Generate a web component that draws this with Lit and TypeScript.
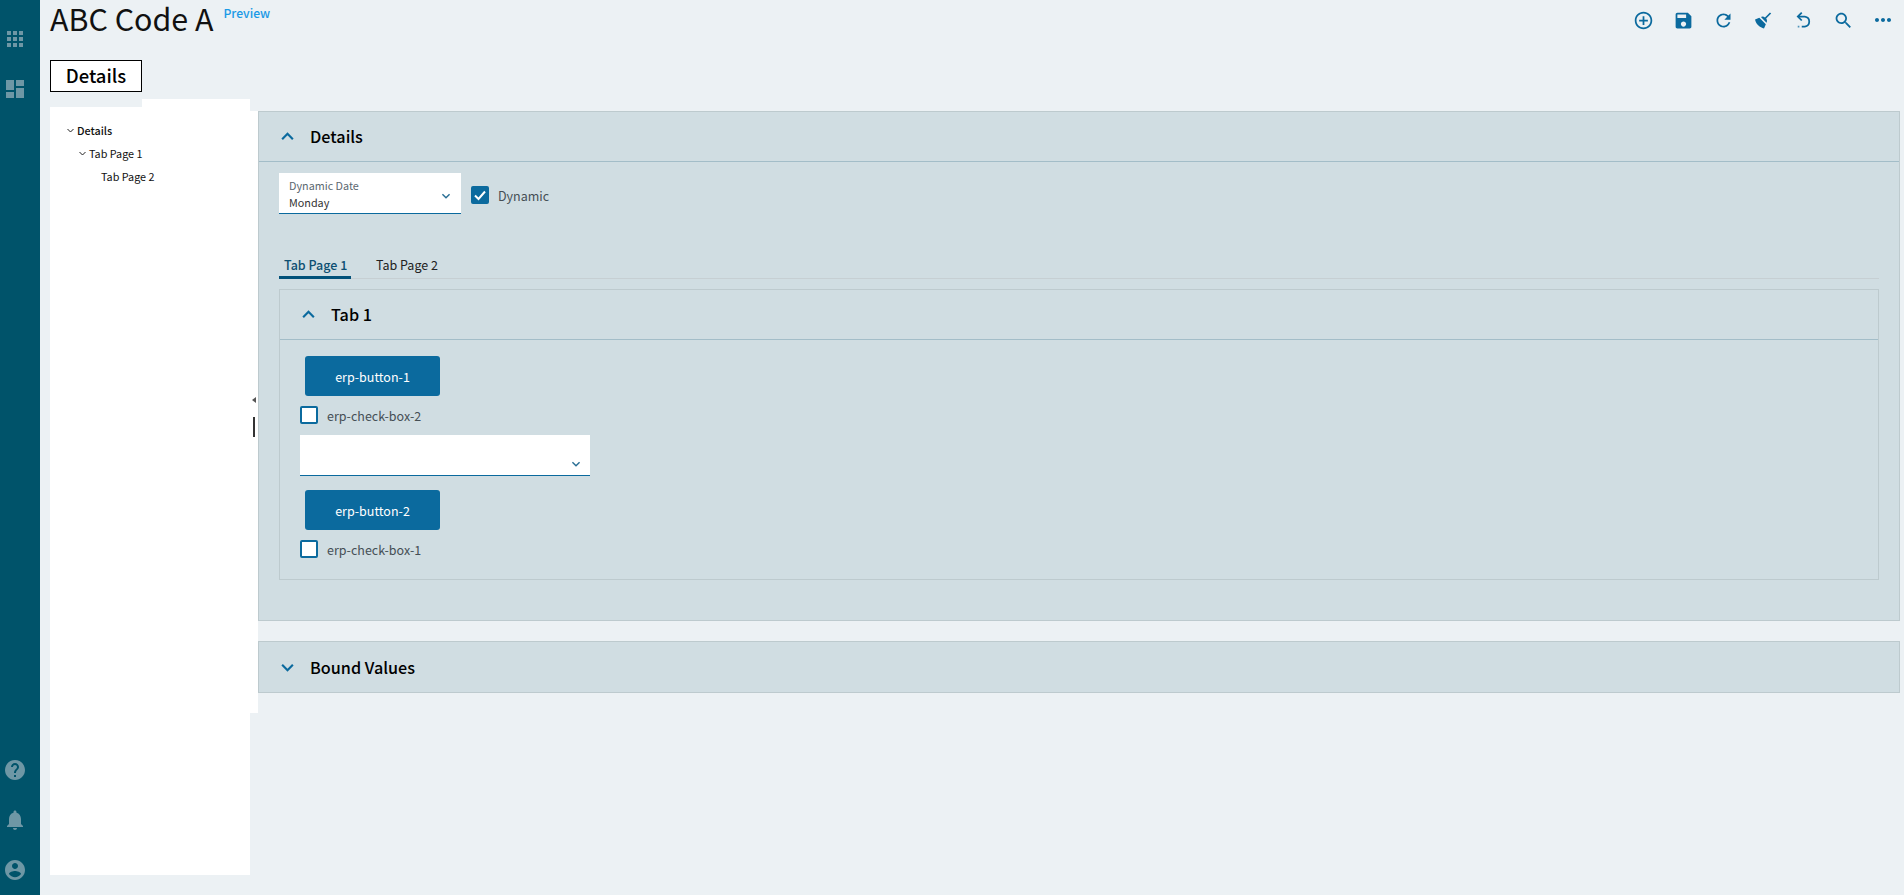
import { LitElement, html, css, svg } from "lit";
import { customElement } from "lit/decorators.js";

const icon = (d: string, size = 24) =>
  html`<svg width=${size} height=${size} viewBox="0 0 24 24" fill="currentColor">${svg`<path d=${d}></path>`}</svg>`;

const P = {
  apps: "M4 8h4V4H4v4zm6 12h4v-4h-4v4zm-6 0h4v-4H4v4zm0-6h4v-4H4v4zm6 0h4v-4h-4v4zm6-10v4h4V4h-4zm-6 4h4V4h-4v4zm6 6h4v-4h-4v4zm0 6h4v-4h-4v4z",
  dash: "M3 13h8V3H3v10zm0 8h8v-6H3v6zm10 0h8V11h-8v10zm0-18v6h8V3h-8z",
  help: "M12 2C6.48 2 2 6.48 2 12s4.48 10 10 10 10-4.48 10-10S17.52 2 12 2zm1 17h-2v-2h2v2zm2.07-7.75l-.9.92C13.45 12.9 13 13.5 13 15h-2v-.5c0-1.1.45-2.1 1.17-2.83l1.24-1.26c.37-.36.59-.86.59-1.41 0-1.1-.9-2-2-2s-2 .9-2 2H8c0-2.21 1.79-4 4-4s4 1.79 4 4c0 .88-.36 1.68-.93 2.25z",
  bell: "M12 22c1.1 0 2-.9 2-2h-4c0 1.1.9 2 2 2zm6-6v-5c0-3.07-1.63-5.64-4.5-6.32V4c0-.83-.67-1.5-1.5-1.5s-1.5.67-1.5 1.5v.68C7.64 5.36 6 7.92 6 11v5l-2 2v1h16v-1l-2-2z",
  user: "M12 2C6.48 2 2 6.48 2 12s4.48 10 10 10 10-4.48 10-10S17.52 2 12 2zm0 3c1.66 0 3 1.34 3 3s-1.34 3-3 3-3-1.34-3-3 1.34-3 3-3zm0 14.2c-2.5 0-4.71-1.28-6-3.22.03-1.99 4-3.08 6-3.08 1.99 0 5.97 1.09 6 3.08-1.29 1.94-3.5 3.22-6 3.22z",
  add: "M13 7h-2v4H7v2h4v4h2v-4h4v-2h-4V7zm-1-5C6.48 2 2 6.48 2 12s4.48 10 10 10 10-4.48 10-10S17.52 2 12 2zm0 18c-4.41 0-8-3.59-8-8s3.59-8 8-8 8 3.59 8 8-3.59 8-8 8z",
  save: "M17 3H5c-1.11 0-2 .9-2 2v14c0 1.1.89 2 2 2h14c1.1 0 2-.9 2-2V7l-4-4zm-5 16c-1.66 0-3-1.34-3-3s1.34-3 3-3 3 1.34 3 3-1.34 3-3 3zm3-10H5V5h10v4z",
  refresh: "M17.65 6.35C16.2 4.9 14.21 4 12 4c-4.42 0-7.99 3.58-7.99 8s3.57 8 7.99 8c3.73 0 6.84-2.55 7.73-6h-2.08c-.82 2.33-3.04 4-5.65 4-3.31 0-6-2.69-6-6s2.69-6 6-6c1.66 0 3.14.69 4.22 1.78L13 11h7V4l-2.35 2.35z",
  broom: "M19.36,2.72L20.78,4.14L15.06,9.85C16.13,11.39 16.28,13.24 15.38,14.44L9.06,8.12C10.26,7.22 12.11,7.37 13.65,8.44L19.36,2.72M5.93,17.57C3.92,15.56 2.69,13.16 2.35,10.92L7.23,8.83L14.67,16.27L12.58,21.15C10.34,20.81 7.94,19.58 5.93,17.57Z",
  search: "M15.5 14h-.79l-.28-.27C15.41 12.59 16 11.11 16 9.5 16 5.91 13.09 3 9.5 3S3 5.91 3 9.5 5.91 16 9.5 16c1.61 0 3.09-.59 4.23-1.57l.27.28v.79l5 4.99L20.49 19l-4.99-5zm-6 0C7.01 14 5 11.99 5 9.5S7.01 5 9.5 5 14 7.01 14 9.5 11.99 14 9.5 14z",
  more: "M6 10c-1.1 0-2 .9-2 2s.9 2 2 2 2-.9 2-2-.9-2-2-2zm12 0c-1.1 0-2 .9-2 2s.9 2 2 2 2-.9 2-2-.9-2-2-2zm-6 0c-1.1 0-2 .9-2 2s.9 2 2 2 2-.9 2-2-.9-2-2-2z",
};

const undo = html`<svg width="21" height="21" viewBox="0 0 24 24" fill="none" stroke="currentColor" stroke-width="2">
  ${svg`<path d="M10 3 5.5 7.5 10 12"></path><path d="M6 7.5h7.5a5.8 5.8 0 0 1 0 11.5H10"></path><path d="M5.5 19H8" stroke-dasharray="1 1.2"></path>`}
</svg>`;

const chev = (up: boolean, w = 15, cls = "chev") =>
  html`<svg class=${cls} width=${w} height=${w} viewBox="0 0 14 14" fill="none" stroke="currentColor" stroke-width="2">
    ${svg`<path d=${up ? "M2 9.5 7 4.5 12 9.5" : "M2 4.5 7 9.5 12 4.5"}></path>`}
  </svg>`;

const small = html`<svg width="7" height="5" viewBox="0 0 7 5" fill="none" stroke="#222" stroke-width="1">${svg`<path d="M.5 1 3.5 4 6.5 1"></path>`}</svg>`;

@customElement("app-root")
export class AppRoot extends LitElement {
  static styles = css`
    :host {
      display: flex;
      width: 1904px;
      height: 895px;
      overflow: hidden;
      background: #ecf1f4;
      font-family: "Noto Sans CJK SC", "Source Sans Pro", "Noto Sans", sans-serif;
      color: #000;
    }
    .rail {
      width: 40px;
      flex: none;
      background: #00536a;
      color: #6e97a5;
      display: flex;
      flex-direction: column;
      justify-content: space-between;
      box-sizing: border-box;
      padding: 24px 0 10px;
    }
    .rail-group { display: flex; flex-direction: column; gap: 20px; }
    .rail-item { height: 30px; display: flex; align-items: center; justify-content: center; padding-right: 10px; width: 40px; box-sizing: border-box; }
    .main { flex: 1; min-width: 0; display: flex; flex-direction: column; padding-left: 10px; }
    .top { height: 60px; display: flex; align-items: flex-start; justify-content: space-between; }
    .title { display: flex; align-items: flex-start; }
    h1 { margin: 0; font-size: 30.4px; font-weight: 400; line-height: 36px; color: #111; white-space: nowrap; }
    .preview { font-size: 12.2px; font-weight: 500; color: #1b9ae6; line-height: 18px; margin: 4px 0 0 10px; }
    .tools { display: flex; color: #0b6a9e; padding: 8px 0 0; margin-right: 1px; }
    .tools span { width: 40px; height: 24px; display: flex; align-items: center; justify-content: center; }
    .tabbar { display: flex; height: 32px; }
    .maintab {
      width: 92px; box-sizing: border-box; border: 1px solid #000; background: #fff; padding-bottom: 2px;
      display: flex; align-items: center; justify-content: center;
      font-size: 18.5px; font-weight: 500; line-height: 24px;
    }
    .body { display: flex; margin-top: 15px; }
    .left { position: relative; width: 200px; height: 768px; background: #fff; flex: none; }
    .left::before { content: ""; position: absolute; left: 92px; top: -8px; width: 108px; height: 8px; background: #fff; }
    .left::after { content: ""; position: absolute; left: 0; top: 4px; width: 208px; height: 602px; background: #fff; }
    .tree { position: relative; z-index: 1; padding-top: 12px; font-size: 10.8px; line-height: 23px; color: #111; }
    .node { display: flex; align-items: center; height: 23px; gap: 3px; white-space: nowrap; }
    .node.l0 { padding-left: 17px; font-weight: 500; }
    .node.l1 { padding-left: 29px; }
    .node.l2 { padding-left: 51px; }
    .grip { position: absolute; z-index: 2; left: 203px; top: 290px; width: 3px; }
    .grip i { display: block; width: 0; height: 0; margin-left: -1px; border: 3px solid transparent; border-left: 0; border-right: 4px solid #555; }
    .grip b { display: block; width: 2px; height: 20px; margin-top: 14px; background: #333; }
    .content { flex: 1; margin: 4px 4px 0 8px; display: flex; flex-direction: column; gap: 20px; }
    .section { background: #d0dde2; border: 1px solid #bdcace; box-sizing: border-box; }
    .head {
      height: 50px; box-sizing: border-box; display: flex; align-items: center; gap: 15px; padding-left: 21px;
      font-size: 16.2px; font-weight: 500; color: #000; white-space: nowrap;
    }
    .head.line { border-bottom: 1px solid #a3bdc8; padding-bottom: 1px; }
    .chev { color: #0b6a9e; flex: none; }
    .details { height: 510px; }
    .bound { height: 52px; }
    .sec-body { padding: 11px 20px 0; }
    .row { display: flex; align-items: center; }
    .select {
      position: relative; width: 182px; height: 41px; box-sizing: border-box; background: #fff;
      border-bottom: 1px solid #0b6a9e; padding: 4px 10px; font-size: 10.8px; line-height: 16px;
    }
    .select .lab { color: #5c6870; }
    .select .val { color: #333; margin-top: 1px; }
    .sel-chev { position: absolute; right: 10px; top: 18px; color: #2a6f95; }
    .cb {
      width: 18px; height: 18px; box-sizing: border-box; border: 2px solid #0b6a9e; border-radius: 2px; background: #fff;
      display: flex; align-items: center; justify-content: center; flex: none;
    }
    .cb.on { background: #0b6a9e; }
    .cb-wrap { display: flex; align-items: center; gap: 9px; font-size: 12.5px; color: #454f55; height: 18px; white-space: nowrap; }
    .row .cb-wrap { margin: 3px 0 0 10px; }
    .tabs { display: flex; margin-top: 36px; height: 29px; border-bottom: 1px solid #c6cfd3; box-sizing: border-box; font-size: 12.5px; font-weight: 400; color: #222; width: 1600px; white-space: nowrap; }
    .tab { padding: 0 5px; height: 29px; box-sizing: border-box; line-height: 29px; }
    .tab.on { width: 72px; border-bottom: 3px solid #03527a; color: #0d4f72; font-weight: 500; margin-right: 20px; }
    .inner { margin-top: 10px; width: 1600px; height: 291px; box-sizing: border-box; }
    .inner-body { padding: 16px 20px 0; display: flex; flex-direction: column; align-items: flex-start; }
    .btn {
      width: 135px; height: 40px; margin-left: 5px; background: #0b6a9e; color: #fff; border: none; border-radius: 3px;
      font: 400 12.5px "Noto Sans CJK SC", sans-serif; display: flex; align-items: center; justify-content: center;
    }
    .inner-body .cb-wrap { margin-top: 10px; }
    .select2 { width: 290px; height: 41px; margin-top: 11px; margin-bottom: 14px; position: relative; box-sizing: border-box; background: #fff; border-bottom: 1px solid #0b6a9e; }
    .select2 .sel-chev { right: 9px; top: 24px; }
  `;

  render() {
    return html`
      <nav class="rail">
        <div class="rail-group">
          <div class="rail-item">${icon(P.apps, 24)}</div>
          <div class="rail-item">${icon(P.dash, 24)}</div>
        </div>
        <div class="rail-group">
          <div class="rail-item">${icon(P.help, 24)}</div>
          <div class="rail-item">${icon(P.bell, 24)}</div>
          <div class="rail-item">${icon(P.user, 24)}</div>
        </div>
      </nav>
      <div class="main">
        <header class="top">
          <div class="title"><h1>ABC Code A</h1><span class="preview">Preview</span></div>
          <div class="tools">
            <span>${icon(P.add, 21)}</span>
            <span>${icon(P.save, 21)}</span>
            <span>${icon(P.refresh, 21)}</span>
            <span>${icon(P.broom, 21)}</span>
            <span>${undo}</span>
            <span>${icon(P.search, 21)}</span>
            <span>${icon(P.more, 24)}</span>
          </div>
        </header>
        <div class="tabbar"><div class="maintab">Details</div></div>
        <div class="body">
          <aside class="left">
            <div class="tree">
              <div class="node l0">${small}<span>Details</span></div>
              <div class="node l1">${small}<span>Tab Page 1</span></div>
              <div class="node l2"><span>Tab Page 2</span></div>
            </div>
            <div class="grip"><i></i><b></b></div>
          </aside>
          <div class="content">
            <section class="section details">
              <div class="head line">${chev(true)}<span>Details</span></div>
              <div class="sec-body">
                <div class="row">
                  <div class="select">
                    <div class="lab">Dynamic Date</div>
                    <div class="val">Monday</div>
                    ${chev(false, 10, "sel-chev")}
                  </div>
                  <label class="cb-wrap">
                    <span class="cb on"><svg width="14" height="14" viewBox="0 0 14 14" fill="none" stroke="#fff" stroke-width="2">${svg`<path d="M2 7.5 5.5 11 12 3.5"></path>`}</svg></span>
                    <span>Dynamic</span>
                  </label>
                </div>
                <div class="tabs">
                  <div class="tab on">Tab Page 1</div>
                  <div class="tab">Tab Page 2</div>
                </div>
                <section class="section inner">
                  <div class="head line">${chev(true)}<span>Tab 1</span></div>
                  <div class="inner-body">
                    <div class="btn">erp-button-1</div>
                    <label class="cb-wrap"><span class="cb"></span><span>erp-check-box-2</span></label>
                    <div class="select2">${chev(false, 10, "sel-chev")}</div>
                    <div class="btn">erp-button-2</div>
                    <label class="cb-wrap"><span class="cb"></span><span>erp-check-box-1</span></label>
                  </div>
                </section>
              </div>
            </section>
            <section class="section bound">
              <div class="head">${chev(false)}<span>Bound Values</span></div>
            </section>
          </div>
        </div>
      </div>
    `;
  }
}
